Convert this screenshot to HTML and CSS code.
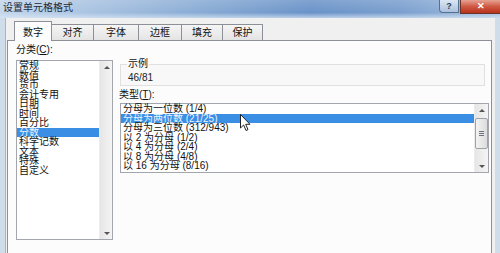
FILE: index.html
```html
<!DOCTYPE html>
<html lang="zh-CN">

<head>
    <meta charset="UTF-8">
    <title>设置单元格格式</title>
    <link rel="stylesheet" href="styles.css">
</head>

<body>
    <div class="window">
        <div class="titlebar">
            <span class="title">设置单元格格式</span>
            <div class="caption-btns">
                <span class="help">?</span>
                <span class="close">✕</span>
            </div>
        </div>
        <div class="frame">
            <div class="body">
                <div class="tabs">
                    <span class="tab active t1">数字</span>
                    <span class="tab t2">对齐</span>
                    <span class="tab t3">字体</span>
                    <span class="tab t4">边框</span>
                    <span class="tab t5">填充</span>
                    <span class="tab t6">保护</span>
                </div>
                <div class="panel">
                    <div class="col-left">
                        <div class="label">分类(<u>C</u>):</div>
                        <div class="listbox cat">
                            <ul class="items">
                                <li>常规</li>
                                <li>数值</li>
                                <li>货币</li>
                                <li>会计专用</li>
                                <li>日期</li>
                                <li>时间</li>
                                <li>百分比</li>
                                <li class="sel">分数</li>
                                <li>科学记数</li>
                                <li>文本</li>
                                <li>特殊</li>
                                <li>自定义</li>
                            </ul>
                            <div class="scrollbar">
                                <span class="arrow up"></span>
                                <span class="track"></span>
                                <span class="arrow down"></span>
                            </div>
                        </div>
                    </div>
                    <div class="col-right">
                        <fieldset class="sample">
                            <legend>示例</legend>
                            <div class="sample-text">46/81</div>
                        </fieldset>
                        <div class="label">类型(<u>T</u>):</div>
                        <div class="listbox types">
                            <ul class="items">
                                <li>分母为一位数 (1/4)</li>
                                <li class="sel">分母为两位数 (21/25)</li>
                                <li>分母为三位数 (312/943)</li>
                                <li>以 2 为分母 (1/2)</li>
                                <li>以 4 为分母 (2/4)</li>
                                <li>以 8 为分母 (4/8)</li>
                                <li>以 16 为分母 (8/16)</li>
                            </ul>
                            <div class="scrollbar">
                                <span class="arrow up"></span>
                                <span class="thumb"><i></i><i></i><i></i></span>
                                <span class="track"></span>
                                <span class="arrow down"></span>
                            </div>
                        </div>
                    </div>
                </div>
            </div>
        </div>

        <!-- mouse pointer over the type list -->
        <svg class="cursor" width="12" height="18" viewBox="0 0 12 18">
            <path d="M0.5 0.5 L0.5 14 L3.6 11 L6 16.5 L8 15.6 L5.7 10.3 L10 10.3 Z" fill="#fff" stroke="#222"
                stroke-width="1" stroke-linejoin="round" />
        </svg>
    </div>
</body>

</html>
```

FILE: styles.css
```css
* {
    margin: 0;
    padding: 0;
    box-sizing: border-box;
}

body {
    font-family: "Liberation Sans", "Noto Sans CJK SC", sans-serif;
    font-size: 10px;
    color: #111;
    background-color: #d3e1f0;
    overflow: hidden;
}

.window {
    position: relative;
    width: 500px;
    height: 253px;
    overflow: hidden;
}

/* title bar */

.titlebar {
    display: flex;
    align-items: flex-start;
    height: 18px;
    background: linear-gradient(to bottom, rgba(255, 255, 255, 0.15), rgba(255, 255, 255, 0) 70%, rgba(220, 232, 245, 0.7)),
        linear-gradient(to right, #c3d6eb 0%, #a9c3e1 18%, #86a9d3 42%, #6a93c8 62%, #7a9fce 80%, #a5bfdf 100%);
}

.title {
    padding: 2px 0 0 3px;
    line-height: 12px;
    font-size: 10px;
    color: #1b2b40;
}

.caption-btns {
    display: flex;
    margin-left: auto;
}

.help {
    width: 20px;
    height: 13px;
    margin-right: 1px;
    border: 1px solid #56708f;
    border-top: none;
    border-radius: 0 0 0 4px;
    background: linear-gradient(#dce7f4, #aac0dc);
    color: #2a3d57;
    font-size: 9px;
    line-height: 12px;
    text-align: center;
    font-weight: bold;
}

.close {
    width: 40px;
    height: 14px;
    border: 1px solid #6b3429;
    border-top: none;
    border-right: none;
    background: linear-gradient(#e6a293, #cf5a44 50%, #b8301b);
    color: #fff;
    font-size: 9px;
    line-height: 13px;
    text-align: center;
    font-weight: bold;
}

/* frame and body */

.frame {
    display: flex;
    height: 235px;
    padding: 0 5px;
    background: linear-gradient(to right, #cfdcea, #d9e4f0 50%, #cfdcea);
}

.body {
    flex: 1;
    padding: 3px 3px 0 1px;
    background-color: #f0f0f0;
    border-left: 1px solid #a7b5c5;
}

.tabs {
    display: flex;
    align-items: flex-end;
    height: 19px;
    padding-left: 7px;
    position: relative;
    z-index: 1;
}

.tab {
    height: 16px;
    border: 1px solid #8d9097;
    border-bottom: none;
    border-left: none;
    background: linear-gradient(#f5f5f5, #e4e4e4);
    text-align: center;
    line-height: 15px;
    font-size: 10px;
}

.tab.active {
    height: 20px;
    margin-bottom: -1px;
    border-left: 1px solid #8d9097;
    background: #fcfcfc;
    line-height: 21px;
}

.t1 { width: 38px; }
.t2 { width: 42px; }
.t3 { width: 45px; }
.t4 { width: 43px; }
.t5 { width: 41px; }
.t6 { width: 40px; }

.panel {
    display: grid;
    grid-template-columns: 97px 370px;
    column-gap: 6px;
    height: 220px;
    padding: 3px 2px 0 8px;
    border: 1px solid #8d9097;
    background-color: #fcfcfc;
}

.label {
    line-height: 12px;
    font-size: 10px;
}

.col-left .label {
    margin-bottom: 4px;
}

/* list boxes */

.listbox {
    display: flex;
    border: 1px solid #a3a7ad;
    background-color: #fff;
}

.items {
    flex: 1;
    list-style: none;
    padding-left: 2px;
}

.items li {
    height: 9.5px;
    line-height: 9.5px;
    font-size: 10px;
    white-space: nowrap;
}

.items li.sel {
    margin-left: -2px;
    padding-left: 2px;
    background-color: #3a8fe4;
    color: #eaf4ff;
}

.cat {
    height: 180px;
}

.types {
    height: 70px;
    margin-left: 1px;
}

.scrollbar {
    display: flex;
    flex-direction: column;
    width: 13px;
    background: linear-gradient(to right, #e6e6e6, #f4f4f4);
    border-left: 1px solid #ececec;
}

.types .scrollbar {
    width: 14px;
}

.scrollbar .track {
    flex: 1;
}

.arrow {
    position: relative;
    height: 13px;
}

.arrow::after {
    content: "";
    position: absolute;
    left: 4px;
    border-left: 3px solid transparent;
    border-right: 3px solid transparent;
}

.arrow.up::after {
    top: 5px;
    border-bottom: 3px solid #555;
}

.arrow.down::after {
    top: 6px;
    border-top: 3px solid #555;
}

.thumb {
    display: flex;
    flex-direction: column;
    justify-content: center;
    align-items: center;
    gap: 1px;
    height: 31px;
    margin: 1px 0 0 0;
    border: 1px solid #9ea3aa;
    border-radius: 2px;
    background: linear-gradient(to right, #f3f3f3, #dcdcdc);
}

.thumb i {
    display: block;
    width: 5px;
    height: 1px;
    background-color: #6c7280;
}

/* sample group */

.sample {
    margin: 15px 4px 3px 1px;
    padding: 0 0 1px 6px;
    border: 1px solid #e0e0e0;
    background-color: #f8f8f8;
}

.sample legend {
    padding: 0 1px;
    line-height: 10px;
    font-size: 10px;
}

.sample-text {
    padding: 3px 0 0 1px;
    line-height: 12px;
    font-size: 10px;
    color: #222;
}

.col-right .label {
    margin-bottom: 2px;
}

.cursor {
    position: absolute;
    left: 240px;
    top: 114px;
}
```
